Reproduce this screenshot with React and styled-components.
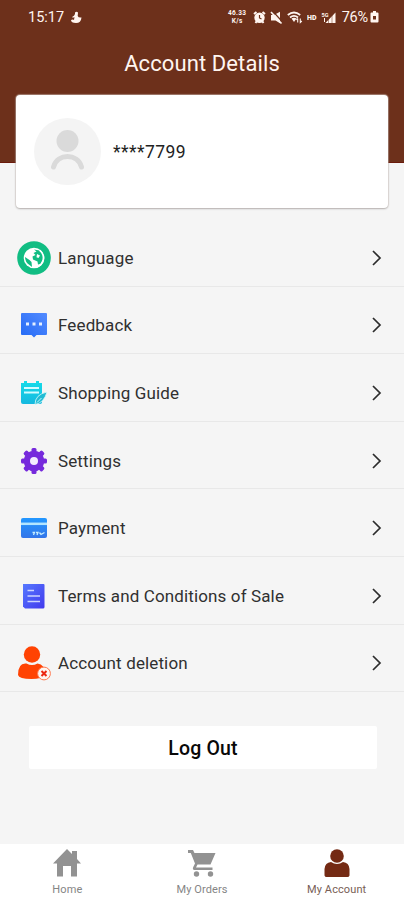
import React from "react";
import styled, { createGlobalStyle } from "styled-components";

const GlobalStyle = createGlobalStyle`
  * {
    box-sizing: border-box;
  }

  body {
    margin: 0;
    background: #f5f5f5;
    font-family: Roboto, sans-serif;
  }

  svg {
    display: block;
    flex: none;
  }
`;

const Screen = styled.div`
  display: flex;
  flex-direction: column;
  width: 404px;
  height: 900px;
  overflow: hidden;
  background: #f5f5f5;
`;

const Header = styled.header`
  flex: none;
  height: 163px;
  background: #6d301b;
  border-bottom: 1px solid #6a1a0b;
  color: #fff5f0;
`;

const StatusBar = styled.div`
  display: flex;
  align-items: center;
  justify-content: space-between;
  height: 34px;
  padding: 0 25px 0 28px;
`;

const Clock = styled.div`
  display: flex;
  align-items: center;
  gap: 6px;
  font-size: 14.5px;
`;

const StatusIcons = styled.div`
  display: flex;
  align-items: center;
`;

const StatusGlyphs = styled.div`
  display: flex;
  align-items: center;
  gap: 4px;
`;

const Speed = styled.div`
  display: flex;
  flex-direction: column;
  align-items: center;
  width: 21px;
  margin-right: 5px;
  font-size: 6.5px;
  font-weight: 700;
  line-height: 8px;
  letter-spacing: 0.3px;
`;

const Battery = styled.span`
  margin: 0 2px 0 5px;
  font-size: 14.5px;
  letter-spacing: -0.2px;
`;

const Title = styled.h1`
  margin: 15px 0 0;
  font-size: 22px;
  font-weight: 400;
  line-height: 30px;
  letter-spacing: 0.1px;
  text-align: center;
`;

const Card = styled.section`
  position: relative;
  flex: none;
  display: flex;
  align-items: center;
  gap: 12px;
  height: 113px;
  margin: -68px 16px 0;
  padding-left: 18px;
  background: #fff;
  border-radius: 4px;
  box-shadow: 0 1px 2px rgba(0, 0, 0, 0.22), 0 0 1px 1px rgba(215, 205, 200, 0.5);
`;

const Phone = styled.span`
  font-size: 17.5px;
  letter-spacing: 0.45px;
  color: #222;
`;

const Menu = styled.ul`
  flex: none;
  margin: 11px 0 0;
  padding: 0;
  list-style: none;
`;

const Item = styled.li`
  display: flex;
  align-items: center;
  height: 67.6px;
  padding: 11px 21px 0 15px;
  border-bottom: 1px solid #e8e8e8;
`;

const ItemIcon = styled.span`
  flex: none;
  width: 38px;
  height: 38px;
  margin-right: 5px;
`;

const ItemLabel = styled.span`
  flex: 1;
  font-size: 17px;
  letter-spacing: 0.13px;
  color: #303030;
`;

const LogOut = styled.button`
  flex: none;
  height: 43px;
  margin: 34px 27px 0 29px;
  padding: 2px 0 0;
  border: 0;
  border-radius: 2px;
  background: #fff;
  color: #080808;
  font-family: inherit;
  font-size: 19.5px;
  font-weight: 500;
  letter-spacing: 0.15px;
`;

const TabBar = styled.nav`
  flex: none;
  display: grid;
  grid-template-columns: repeat(3, 1fr);
  height: 56px;
  margin-top: auto;
  background: #fff;
`;

const Tab = styled.div`
  display: flex;
  flex-direction: column;
  align-items: center;
  gap: 5px;
  padding-top: 4px;
  font-size: 11px;
  line-height: 14px;
  letter-spacing: 0.1px;
  color: ${({ $active }) => ($active ? "#785e55" : "#858585")};
`;

const GhostIcon = () => (
  <svg width="12" height="13" viewBox="0 0 12 13" fill="#fff5f0">
    <path d="M5 1.5Q6.5 0 8 1.5L7.7 5Q8.5 7 11.5 6.5Q11 12 6 12Q1 12 1 9Q3 8 4 9L4.5 6Q3 7 2 6Q4.5 5 5 3Z" />
  </svg>
);

const AlarmIcon = () => (
  <svg width="13" height="13" viewBox="0 0 13 13">
    <path d="M1 3L3.5 1M12 3L9.5 1M2.5 12L3.5 10.5M10.5 12L9.5 10.5" stroke="#fff5f0" strokeWidth="2" />
    <circle cx="6.5" cy="6.8" r="5.2" fill="#fff5f0" />
    <path d="M6.5 4V7L8.5 8" fill="none" stroke="#6d301b" strokeWidth="1.2" />
  </svg>
);

const MuteIcon = () => (
  <svg width="13" height="13" viewBox="0 0 13 13">
    <path d="M1 4H4L10 .8V12.3L5.5 9.5H1Z" fill="#fff5f0" />
    <path d="M3 .5L13 11.5" stroke="#6d301b" strokeWidth="1.2" />
    <path d="M1 1L11.5 12.5" stroke="#fff5f0" strokeWidth="1.6" />
  </svg>
);

const WifiIcon = () => (
  <svg width="16" height="13" viewBox="0 0 16 13" fill="none" stroke="#fff5f0">
    <path d="M.8 4Q7 -1 13.2 4M3 6.5Q7 3.2 11 6.5" strokeWidth="1.8" />
    <path d="M4.5 7.5Q7 6 9.5 7.5L7 11Z" fill="#fff5f0" stroke="none" />
    <path d="M10.7 11.5V7.5M9.4 8.8L10.7 7.3M13.3 7.5V11.5L14.8 10" strokeWidth="1.1" />
  </svg>
);

const SignalIcon = () => (
  <svg width="30" height="13" viewBox="0 0 30 13" fill="#fff5f0">
    <text x="0" y="9" fontSize="7" fontWeight="900">HD</text>
    <text x="14.5" y="5.5" fontSize="5.5" fontWeight="700">5G</text>
    <path d="M18.5 12L28.5 1.5V12Z" />
    <path d="M21.5 7V12M25 4V12" stroke="#6d301b" strokeWidth=".5" />
    <path d="M17.5 7V11" stroke="#fff5f0" />
  </svg>
);

const BatteryIcon = () => (
  <svg width="9" height="12" viewBox="0 0 9 12">
    <path d="M3 0H6V1.4H7.5Q8.5 1.4 8.5 2.5V10.5Q8.5 11.5 7.5 11.5H1.5Q.5 11.5 .5 10.5V2.5Q.5 1.4 1.5 1.4H3Z" fill="#fff5f0" />
    <path d="M3 5V8.5H6V5Z" fill="#6d301b" />
  </svg>
);

const Avatar = () => (
  <svg width="67" height="67" viewBox="0 0 67 67">
    <circle cx="33.5" cy="33.5" r="33.5" fill="#f4f4f4" />
    <circle cx="33.5" cy="23" r="11" fill="#dadada" />
    <path d="M19.5 49C23.5 35 43.5 35 47.5 49" fill="none" stroke="#dadada" strokeWidth="5" strokeLinecap="round" />
  </svg>
);

const Chevron = () => (
  <svg width="12" height="18" viewBox="0 0 12 18">
    <path d="M2 2L9 9L2 16" fill="none" stroke="#2c2c2c" strokeWidth="1.7" />
  </svg>
);

const LanguageIcon = () => (
  <svg width="38" height="38" viewBox="0 0 38 38">
    <circle cx="19" cy="19" r="16.8" fill="#11bd83" />
    <circle cx="19" cy="19" r="10.3" fill="#fff" />
    <path d="M19 10.5L24.5 11.5Q29 15 27.5 21L25.5 25L23 25.5L22.5 22.5L18 20.5L17.5 17.5L20.5 16L18.5 14L21.5 12.5Z" fill="#11bd83" />
    <path d="M10 18L14.5 21L16.5 23L17 28L14.5 26Q10 23 10 18Z" fill="#11bd83" />
    <path d="M22 15L25 16.5L23.5 19L21.5 18.2Z" fill="#fff" />
    <path d="M24.5 11.2Q29.5 15 28.3 21Q27 26 22 28" fill="none" stroke="#fff" strokeWidth="1.6" />
  </svg>
);

const FeedbackIcon = () => (
  <svg width="38" height="38" viewBox="0 0 38 38">
    <defs>
      <linearGradient id="feedback" x1="0" y1="1" x2="1" y2="0">
        <stop offset="0" stopColor="#246af5" />
        <stop offset="1" stopColor="#538bff" />
      </linearGradient>
    </defs>
    <path d="M7 7H31Q32 7 32 8V28Q32 29 31 29H21.5L19 31.5L16.5 29H7Q6 29 6 28V8Q6 7 7 7Z" fill="url(#feedback)" />
    <path d="M11 16.5H14V19.5H11ZM17.5 16.5H20.5V19.5H17.5ZM24 16.5H27V19.5H24Z" fill="#e4efff" />
  </svg>
);

const GuideIcon = () => (
  <svg width="38" height="38" viewBox="0 0 38 38">
    <defs>
      <linearGradient id="guide" x2="0" y2="1">
        <stop offset="0" stopColor="#14dce9" />
        <stop offset="1" stopColor="#16b8df" />
      </linearGradient>
    </defs>
    <path d="M6 9H9V7H12V9H21V7H24V9H27V28Q27 30 25 30H8Q6 30 6 28Z" fill="url(#guide)" />
    <path d="M9 14H24M9 18.5H24" stroke="#d2fbff" strokeWidth="1.8" />
    <path d="M20 30.5Q20 20.5 32 18Q29 29 20 30.5Z" fill="#22bcd4" stroke="#dcfafa" strokeWidth=".8" />
    <path d="M22 28.5L26.5 24" stroke="#c9f7ff" />
  </svg>
);

const SettingsIcon = () => (
  <svg width="38" height="38" viewBox="0 0 38 38">
    {[0, 45, 90, 135].map(angle => (
      <rect
        key={angle}
        x="16.5"
        y="6"
        width="5"
        height="26"
        rx="1.5"
        fill="#762adc"
        transform={`rotate(${angle} 19 19)`}
      />
    ))}
    <circle cx="19" cy="19" r="10.3" fill="#762adc" />
    <circle cx="19" cy="19" r="4" fill="#f5edff" />
  </svg>
);

const PaymentIcon = () => (
  <svg width="38" height="38" viewBox="0 0 38 38">
    <defs>
      <linearGradient id="payment" x2="0" y2="1">
        <stop offset="0" stopColor="#2297ff" />
        <stop offset="1" stopColor="#3375e9" />
      </linearGradient>
    </defs>
    <rect x="6" y="9" width="26" height="20" rx="2" fill="url(#payment)" />
    <path d="M6 14.8H32" stroke="#b2e5ff" strokeWidth="2.5" />
    <path d="M17.5 23.5H19.5L18.5 26M21 23.5H23L22 26M24.5 23.5L26 25.5L29.5 23.5" fill="none" stroke="#c5ecff" strokeWidth="1.3" />
  </svg>
);

const TermsIcon = () => (
  <svg width="38" height="38" viewBox="0 0 38 38">
    <defs>
      <linearGradient id="terms" x2="1" y2="1">
        <stop offset="0" stopColor="#5679ff" />
        <stop offset="1" stopColor="#4239ed" />
      </linearGradient>
    </defs>
    <path d="M8 7H28.5Q29.5 7 29.5 8V30Q29.5 31.5 28 31.5H10L8 29.5Z" fill="url(#terms)" />
    <path d="M12.5 13.5H19M12.5 19H25M12.5 24.5H25" stroke="#ccd4ff" strokeWidth="1.7" />
  </svg>
);

const DeletionIcon = () => (
  <svg width="38" height="38" viewBox="0 0 38 38">
    <circle cx="17" cy="10.5" r="8.2" fill="#ff4303" />
    <path d="M3 31Q3 18.5 11.5 19.5Q17 22.5 22.5 19.5Q30 20 30 31Q27 35 16.5 35Q4 35 3 31Z" fill="#ff4303" />
    <circle cx="29" cy="29.5" r="6.4" fill="#fff5ef" stroke="#ff7950" strokeWidth="1" />
    <path d="M26.5 27L31.5 32M31.5 27L26.5 32" stroke="#ec260f" strokeWidth="2" />
  </svg>
);

const HomeIcon = () => (
  <svg width="30" height="30" viewBox="0 0 30 30" fill="#929292">
    <path d="M15 1L20 6V3H25V11L29 15.5H25V28.5H19V18H11V28.5H5V15.5H1Z" />
  </svg>
);

const CartIcon = () => (
  <svg width="30" height="30" viewBox="0 0 30 30" fill="#929292">
    <path d="M1 2H6L7.5 5H28.5L23.5 16.5H10.5L9 19.5H25.5V22H7Q5 21 6.5 18.5L8 15.5L3.8 5H1Z" />
    <circle cx="9.5" cy="26" r="2.7" />
    <circle cx="23.5" cy="26" r="2.7" />
  </svg>
);

const AccountIcon = () => (
  <svg width="30" height="30" viewBox="0 0 30 30" fill="#742a14">
    <circle cx="15" cy="8" r="6.8" />
    <path d="M2.5 27.5V21Q3 14.5 9 14Q15 18 21 14Q27 14.5 27.5 21V27.5Q27 29 25.5 29H4.5Q3 29 2.5 27.5Z" />
  </svg>
);

const menu = [
  { label: "Language", Icon: LanguageIcon },
  { label: "Feedback", Icon: FeedbackIcon },
  { label: "Shopping Guide", Icon: GuideIcon },
  { label: "Settings", Icon: SettingsIcon },
  { label: "Payment", Icon: PaymentIcon },
  { label: "Terms and Conditions of Sale", Icon: TermsIcon },
  { label: "Account deletion", Icon: DeletionIcon }
];

const tabs = [
  { label: "Home", Icon: HomeIcon },
  { label: "My Orders", Icon: CartIcon },
  { label: "My Account", Icon: AccountIcon, active: true }
];

const App = () => (
  <>
    <GlobalStyle />
    <Screen>
      <Header>
        <StatusBar>
          <Clock>
            15:17
            <GhostIcon />
          </Clock>
          <StatusIcons>
            <Speed>
              <span>46.33</span>
              <span>K/s</span>
            </Speed>
            <StatusGlyphs>
              <AlarmIcon />
              <MuteIcon />
              <WifiIcon />
              <SignalIcon />
            </StatusGlyphs>
            <Battery>76%</Battery>
            <BatteryIcon />
          </StatusIcons>
        </StatusBar>
        <Title>Account Details</Title>
      </Header>

      <Card>
        <Avatar />
        <Phone>****7799</Phone>
      </Card>

      <Menu>
        {menu.map(({ label, Icon }) => (
          <Item key={label}>
            <ItemIcon>
              <Icon />
            </ItemIcon>
            <ItemLabel>{label}</ItemLabel>
            <Chevron />
          </Item>
        ))}
      </Menu>

      <LogOut>Log Out</LogOut>

      <TabBar>
        {tabs.map(({ label, Icon, active }) => (
          <Tab key={label} $active={active}>
            <Icon />
            {label}
          </Tab>
        ))}
      </TabBar>
    </Screen>
  </>
);

export default App;
